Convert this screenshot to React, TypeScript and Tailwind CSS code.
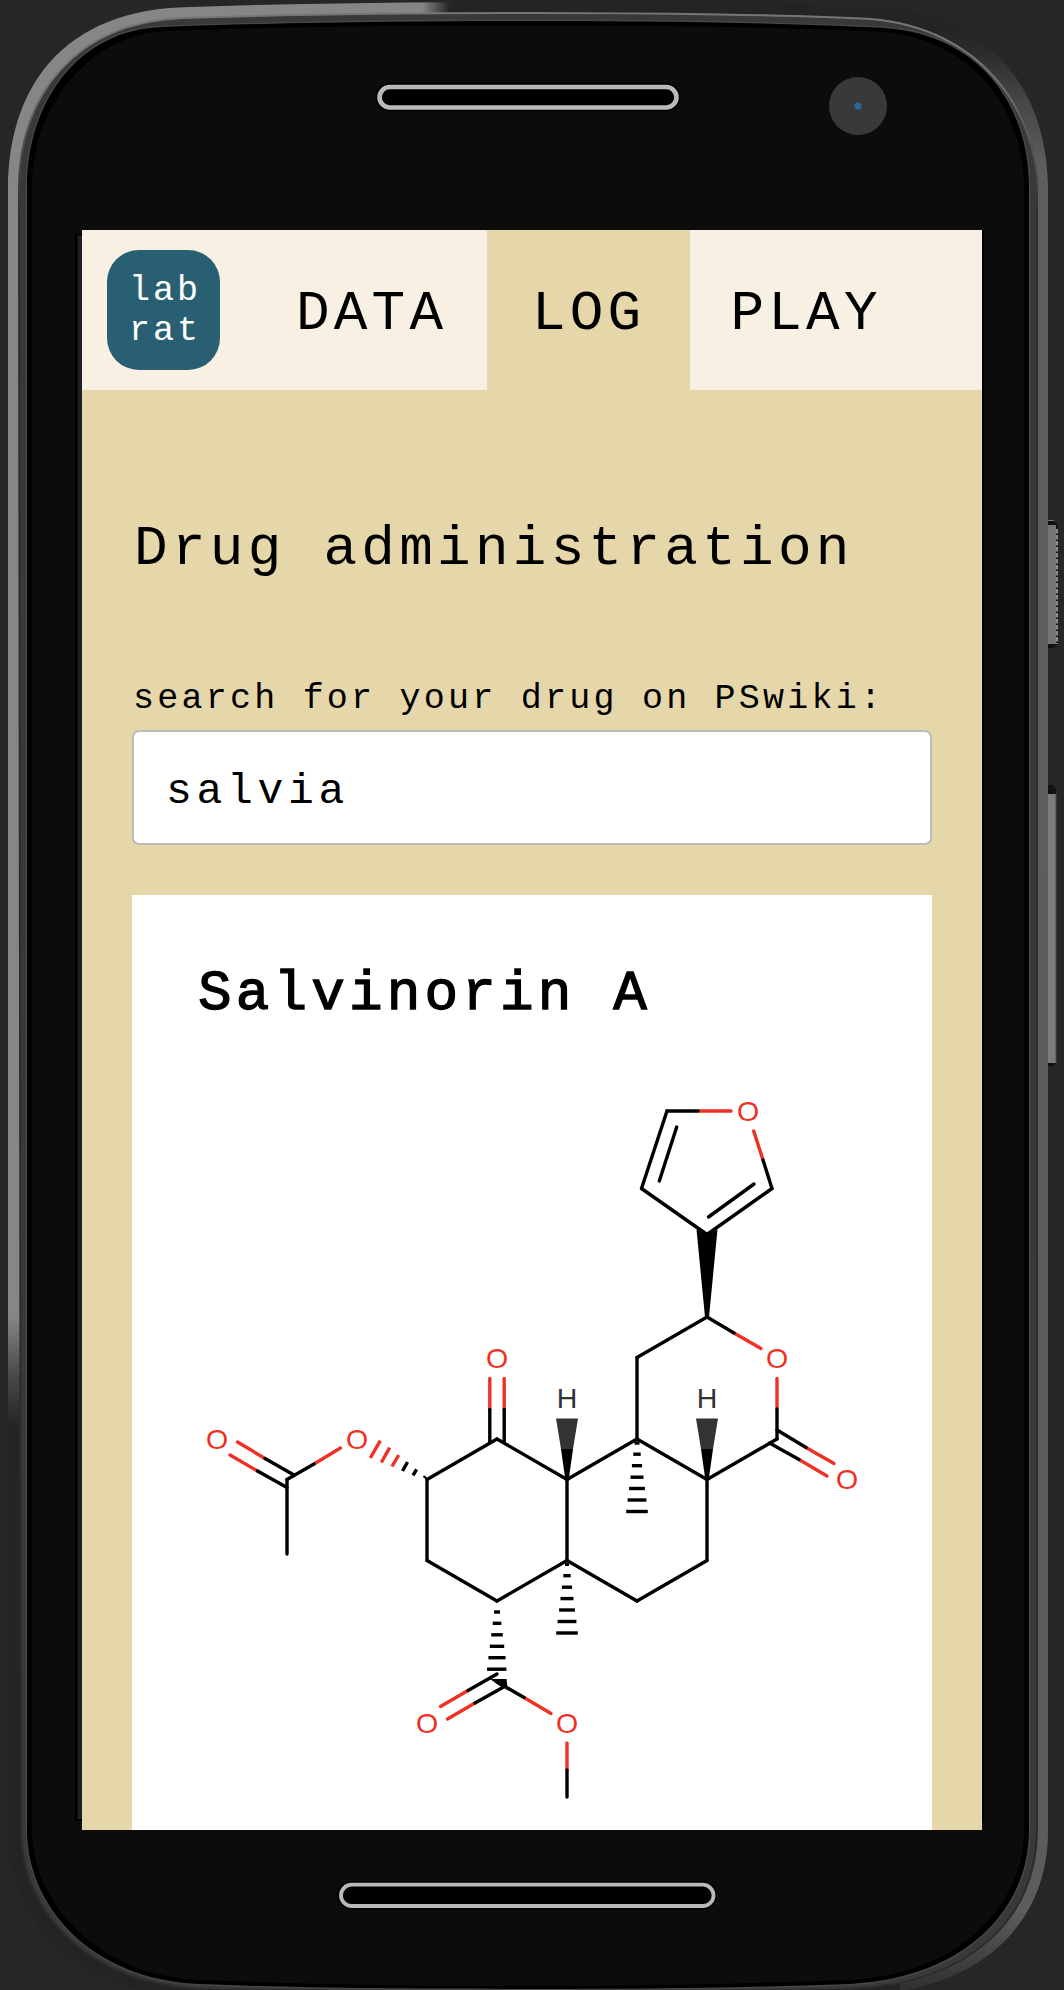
import React from "react";

const RED = "#ee3124";
const MONO = "font-['Liberation_Mono',monospace]";

const OUTER =
  "M8 190C8 90 60 9 190 7C300 3 420 2 532 2C700 2 800 3 880 8C990 14 1048 90 1048 190V1832C1048 1920 985 1990 860 1996H200C75 1996 8 1920 8 1830Z";
const MIDDLE =
  "M19 188C19 95 75 22 183 18C300 14 420 13 532 13C650 13 800 15 871 19C980 28 1037 110 1037 190V1830C1037 1915 975 1983 850 1989C740 1992 300 1992 200 1989C92 1984 21 1915 21 1830Z";
const BEZEL =
  "M27 188C27 100 80 29 163 27C300 22 420 21 532 21C700 21 800 24 885 28C975 34 1029 100 1029 188V1830C1029 1910 965 1978 850 1984C740 1988 640 1989 532 1989C400 1989 300 1988 200 1984C90 1980 27 1905 27 1830Z";
const GLASS =
  "M32 188C32 105 90 33 168 31C300 26 420 25.500 532 25.500C700 25.500 800 28 882 32C968 38 1024 105 1024 188V1830C1024 1905 960 1974 850 1980C740 1984 640 1986 532 1986C400 1986 300 1984 200 1980C95 1976 32 1900 32 1830Z";

function PhoneBody() {
  return (
    <svg className="absolute inset-0" width="1064" height="1990" viewBox="0 0 1064 1990" aria-hidden="true">
      <defs>
        <linearGradient id="topLight" gradientUnits="userSpaceOnUse" x1="422" y1="0" x2="450" y2="0">
          <stop offset="0" stopColor="#868686" />
          <stop offset="1" stopColor="#868686" stopOpacity="0" />
        </linearGradient>
        <linearGradient id="leftLight" gradientUnits="userSpaceOnUse" x1="0" y1="1318" x2="8" y2="1427">
          <stop offset="0" stopColor="#868686" />
          <stop offset="0.5" stopColor="#4c4c4c" />
          <stop offset="1" stopColor="#242424" />
        </linearGradient>
        <linearGradient id="rightLight" gradientUnits="userSpaceOnUse" x1="0" y1="30" x2="0" y2="1990">
          <stop offset="0" stopColor="#242424" />
          <stop offset="0.012" stopColor="#2c2c2c" />
          <stop offset="0.035" stopColor="#454545" />
          <stop offset="0.07" stopColor="#5e5e5e" />
          <stop offset="0.96" stopColor="#5c5c5e" />
          <stop offset="1" stopColor="#303030" />
        </linearGradient>
        <linearGradient id="rim" gradientUnits="userSpaceOnUse" x1="0" y1="0" x2="0" y2="220">
          <stop offset="0" stopColor="#757575" />
          <stop offset="0.35" stopColor="#757575" />
          <stop offset="1" stopColor="#2c2c2c" />
        </linearGradient>
        <clipPath id="clipTop"><rect x="0" y="0" width="455" height="1318" /></clipPath>
        <clipPath id="clipLeft"><rect x="0" y="1317" width="40" height="111" /></clipPath>
        <clipPath id="clipRight"><rect x="900" y="0" width="164" height="1990" /></clipPath>
      </defs>

      {/* side buttons */}
      <path d="M1046 521h8l4 5v118l-4 4h-8z" fill="#111" />
      <rect x="1048" y="525" width="8" height="119" fill="#757577" />
      <path d="M1057 529V644" stroke="#8a8a8a" strokeWidth="2" strokeDasharray="4.500 1.500" />
      <path d="M1048 520.500h6" stroke="#777" strokeWidth="1" />
      <path d="M1046 785h7l3 4v274l-3 3h-7z" fill="#111" />
      <rect x="1048" y="794" width="8" height="269" fill="#7c7c7d" />
      <path d="M1056 794v269" stroke="#4a4a4a" strokeWidth="1" />

      <path d={OUTER} fill="#242424" />
      <path d={OUTER} fill="url(#topLight)" clipPath="url(#clipTop)" />
      <path d={OUTER} fill="url(#leftLight)" clipPath="url(#clipLeft)" />
      <path d={OUTER} fill="url(#rightLight)" clipPath="url(#clipRight)" />
      <path d={MIDDLE} fill="#393939" stroke="url(#rim)" strokeWidth="2" />
      <path d={BEZEL} fill="#000" stroke="#474747" strokeWidth="3" />
      <path d={BEZEL} fill="#000" />
      <path d={GLASS} fill="#0c0c0c" />

      {/* display edge */}
      <path d="M75 233.500H82V1821H75Z" fill="#000" />
      <path d="M77.500 235.500H82V1819H77.500Z" fill="#1d1f25" />
      <path d="M982 230h2V1822h-2z" fill="#000" />

      {/* earpiece, microphone and camera */}
      <rect x="375.500" y="83" width="305" height="28.500" rx="14" fill="#000" />
      <rect x="379.500" y="87" width="297" height="20.500" rx="10.250" fill="#000" stroke="#b9b9ba" strokeWidth="4.600" />
      <rect x="337" y="1881" width="380" height="28.500" rx="14" fill="#000" />
      <rect x="341" y="1884.700" width="372.500" height="21.300" rx="10.600" fill="#000" stroke="#b9b9ba" strokeWidth="3.800" />
      <circle cx="858" cy="106" r="29" fill="#393939" />
      <circle cx="858" cy="106" r="5.500" fill="#333b40" />
      <circle cx="858" cy="106" r="3.600" fill="#2f6795" />
    </svg>
  );
}

type Seg = [number, number, number, number];

const blackBonds: Seg[] = [
  [667, 1111, 698, 1111],
  [667, 1111, 641.5, 1188.5],
  [676.7, 1127, 659.3, 1181],
  [641.5, 1188.5, 707, 1234.5],
  [707, 1234.5, 772, 1188.5],
  [708.5, 1217, 754, 1184],
  [772, 1188.5, 763, 1160],
  [707, 1317, 734, 1333],
  [707, 1317, 637, 1357.5],
  [637, 1357.5, 637, 1439],
  [637, 1439, 707, 1479.5],
  [707, 1479.5, 777, 1439],
  [777, 1439, 777, 1409],
  [777, 1430, 806, 1447.5],
  [769.5, 1443, 799, 1459.5],
  [637, 1439, 567, 1479.5],
  [567, 1479.5, 497, 1439],
  [497, 1439, 427, 1479.5],
  [427, 1479.5, 427, 1560.5],
  [427, 1560.5, 497, 1601],
  [497, 1601, 567, 1560.5],
  [567, 1560.5, 567, 1479.5],
  [567, 1560.5, 637, 1601],
  [637, 1601, 707, 1560.5],
  [707, 1560.5, 707, 1479.5],
  [489.8, 1442, 489.8, 1409.5],
  [504.2, 1442, 504.2, 1409.5],
  [287, 1479.5, 314, 1464],
  [287, 1479.5, 287, 1554],
  [294, 1475, 265, 1458.5],
  [287, 1487.5, 257.5, 1471],
  [497, 1674, 468, 1690.5],
  [504.5, 1686.5, 475, 1703],
  [497, 1682, 524, 1697.5],
  [567, 1770, 567, 1797],
];

const redBonds: Seg[] = [
  [699, 1111, 731, 1111],
  [763, 1160, 753.7, 1131],
  [734, 1333, 761, 1348.5],
  [777, 1409, 777, 1378.5],
  [806, 1447.5, 834, 1463.5],
  [799, 1459.5, 827, 1476],
  [489.8, 1409.5, 489.8, 1378.5],
  [504.2, 1409.5, 504.2, 1378.5],
  [314, 1464, 340.5, 1448],
  [265, 1458.5, 237.5, 1442],
  [257.5, 1471, 230, 1455],
  [468, 1690.5, 440.5, 1706.5],
  [475, 1703, 447.5, 1719],
  [524, 1697.5, 551, 1713.5],
  [567, 1743, 567, 1770],
];

const hashes: Seg[] = [
  [634.5, 1443, 639.5, 1443],
  [633.3, 1454.2, 640.7, 1454.2],
  [631.9, 1465.7, 642.1, 1465.7],
  [630.5, 1477.2, 643.5, 1477.2],
  [629.1, 1488.5, 644.9, 1488.5],
  [627.6, 1500, 646.4, 1500],
  [626.2, 1511.5, 647.8, 1511.5],
  [565, 1564.3, 569, 1564.3],
  [563.3, 1575.7, 570.7, 1575.7],
  [561.9, 1587.2, 572.1, 1587.2],
  [560.5, 1598.6, 573.5, 1598.6],
  [559.1, 1610, 574.9, 1610],
  [557.6, 1621.5, 576.4, 1621.5],
  [556.2, 1633, 577.8, 1633],
  [494, 1612, 500, 1612],
  [492.7, 1623.3, 501.3, 1623.3],
  [491.2, 1634.8, 502.8, 1634.8],
  [489.8, 1646.3, 504.2, 1646.3],
  [488.4, 1657.7, 505.6, 1657.7],
  [487, 1669.2, 506.4, 1669.2],
  [424.2, 1478, 425.4, 1476.2],
  [413, 1475.3, 416.6, 1469.3],
  [402.5, 1471, 407.5, 1462],
];

const redHashes: Seg[] = [
  [392, 1466.5, 398.7, 1455],
  [381.3, 1462.5, 389.7, 1447.7],
  [370.3, 1458, 380.3, 1440.7],
];

const atoms: [string, number, number][] = [
  ["O", 748, 1111],
  ["O", 777, 1358],
  ["O", 847, 1479],
  ["O", 497, 1358],
  ["O", 357, 1439],
  ["O", 217, 1439],
  ["O", 427, 1723],
  ["O", 567, 1723],
  ["H", 567, 1398.3],
  ["H", 707, 1398.3],
];

function Lines({ items, color, cap }: { items: Seg[]; color: string; cap: "round" | "butt" }) {
  return (
    <g stroke={color} strokeWidth="3.400" strokeLinecap={cap}>
      {items.map(([x1, y1, x2, y2], i) => (
        <line key={i} x1={x1} y1={y1} x2={x2} y2={y2} />
      ))}
    </g>
  );
}

function Molecule() {
  return (
    <svg className="block" width="800" height="770" viewBox="132 1060 800 770" role="img" aria-label="Salvinorin A structure">
      <Lines items={redBonds} color={RED} cap="round" />
      <Lines items={blackBonds} color="#000" cap="round" />
      <Lines items={hashes} color="#000" cap="butt" />
      <Lines items={redHashes} color={RED} cap="butt" />
      <path d="M696.500 1229.500L707 1235L717.500 1229.500L709 1317H705Z" fill="#000" />
      {[567, 707].map((x) => (
        <g key={x}>
          <path d={`M${x - 11} 1418.500h22L${x + 6} 1449h-12z`} fill="#333" />
          <path d={`M${x - 6} 1449h12L${x + 1.5} 1481h-3z`} fill="#000" />
        </g>
      ))}
      <path d="M490 1679H506.500L507.500 1687L503 1688Z" fill="#000" />
      {atoms.map(([label, x, y], i) => (
        <text
          key={i}
          x={x}
          y={y + 10}
          textAnchor="middle"
          fill={label === "O" ? RED : "#333"}
          className="font-['Liberation_Sans',sans-serif] text-[28.500px]"
        >
          {label}
        </text>
      ))}
    </svg>
  );
}

export default function App() {
  return (
    <div className={`relative h-[1990px] w-[1064px] overflow-hidden bg-[#262626] pt-[230px] text-black ${MONO}`}>
      <PhoneBody />
      <main className="relative ml-[82px] flex h-[1600px] w-[900px] flex-col overflow-hidden bg-[#e5d7aa]">
        <nav className="flex h-[160px] shrink-0 items-center bg-[#f8f1e3] text-[56px] leading-none tracking-[4.2px]">
          <div className="ml-[25px] flex h-[120px] w-[113px] flex-col items-start rounded-[32px] bg-[#285f72] pt-[21px] pl-[22px] text-[35px] leading-[40px] tracking-[3px] text-white">
            <span>lab</span>
            <span>rat</span>
          </div>
          <a className="flex h-full w-[267px] items-center pt-[7px] pl-[76px]">DATA</a>
          <a className="flex h-full w-[202.500px] items-center bg-[#e5d7aa] pt-[7px] pl-[45px]">LOG</a>
          <a className="flex h-full items-center pt-[7px] pl-[41px]">PLAY</a>
        </nav>
        <section className="flex flex-col px-[50px]">
          <h1 className="mt-[123px] ml-[2px] text-[56px] leading-[72px] tracking-[4.270px] whitespace-nowrap">Drug administration</h1>
          <label htmlFor="drug" className="mt-[93px] ml-[1px] text-[35px] leading-[42px] tracking-[3.230px] whitespace-nowrap">
            search for your drug on PSwiki:
          </label>
          <input
            id="drug"
            defaultValue="salvia"
            className="mt-[10px] h-[115px] w-full rounded-[7px] border-2 border-[#b9bcb6] bg-white px-[32px] pt-[8px] text-[43px] tracking-[4.700px] outline-none"
          />
          <article className="mt-[50px] bg-white">
            <h2 className="h-[165px] pt-[63px] pl-[66px] text-[56px] leading-[72px] font-normal tracking-[4.150px] [-webkit-text-stroke:1.3px_black]">
              Salvinorin A
            </h2>
            <Molecule />
          </article>
        </section>
      </main>
    </div>
  );
}
